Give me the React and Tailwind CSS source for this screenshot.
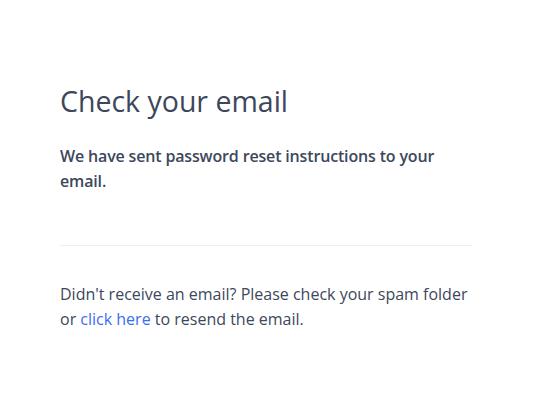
export default function App() {
  return (
    <div className="min-h-screen bg-white" style={{ fontFamily: '"Open Sans", "Noto Sans", sans-serif' }}>
      <div className="w-[412px] ml-[60px] pt-[81px]">
        <h1 className="text-[28.5px] leading-[40px] font-normal text-[#3d475c]">Check your email</h1>
        <p className="mt-[23px] text-[16px] leading-[25px] font-semibold tracking-[-0.16px] text-[#3d475c]">
          We have sent password reset instructions to your email.
        </p>
        <div className="mt-[51px] h-px bg-[#eceef5]" />
        <p className="mt-[36px] text-[16px] leading-[25px] text-[#3d475c]">
          Didn't receive an email? Please check your spam folder or{' '}
          <a href="#" className="text-[#3b6cf5]">click here</a> to resend the email.
        </p>
      </div>
    </div>
  );
}
